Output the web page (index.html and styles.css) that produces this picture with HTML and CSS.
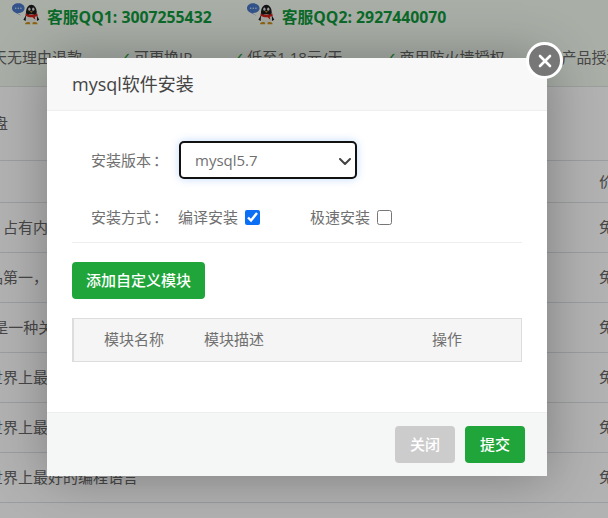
FILE: index.html
```html
<!DOCTYPE html>
<html lang="zh-CN">
<head>
<meta charset="utf-8">
<title>mysql软件安装</title>
<link rel="stylesheet" href="styles.css">
</head>
<body>
<svg class="defs" width="0" height="0" aria-hidden="true">
  <symbol id="qq" viewBox="0 0 30 22">
    <path d="M6.500 0C10.100 0 13 2.200 13 5s-2.900 5-6.500 5c-.3 0-.6 0-.9 0L10 13 3.200 9.400C1.300 8.500 0 6.900 0 5 0 2.200 2.900 0 6.500 0z" fill="#4a78c6"/>
    <circle cx="3.800" cy="5" r=".8" fill="#cfe0f5"/><circle cx="6.500" cy="5" r=".8" fill="#cfe0f5"/><circle cx="9.200" cy="5" r=".8" fill="#cfe0f5"/>
    <path d="M14.500 12 11.800 17l2.400 1.200zM25.500 12l2.700 5-2.400 1.200z" fill="#1c1c1c"/>
    <ellipse cx="20" cy="9" rx="5.600" ry="7.500" fill="#1c1c1c"/>
    <ellipse cx="20" cy="16" rx="5.600" ry="4.800" fill="#ecece4"/>
    <ellipse cx="18" cy="6" rx="1.200" ry="1.700" fill="#ddd"/><ellipse cx="22" cy="6" rx="1.200" ry="1.700" fill="#ddd"/>
    <path d="M18.400 8.200h3.200L20 9.800z" fill="#d9a520"/>
    <path d="M13.800 10.500c3 1.700 9.400 1.700 12.400 0l.4 2.600-3 .8.500 3-2.800-2.600c-2.200.2-4.400 0-7-1.200z" fill="#d0201a"/>
    <path d="M13.500 21.500c0-1.700 2.300-2.700 5-1.700l.5 1.700zM26.500 21.500c0-1.700-2.300-2.700-5-1.700l-.5 1.700z" fill="#c98f1a"/>
  </symbol>
</svg>

<header class="top">
  <div class="contacts">
    <div class="contact"><svg class="qq-icon"><use href="#qq"/></svg><span>客服QQ1: 3007255432</span></div>
    <div class="contact"><svg class="qq-icon"><use href="#qq"/></svg><span>客服QQ2: 2927440070</span></div>
  </div>
  <ul class="features">
    <li>天无理由退款</li>
    <li><i>✓</i>可更换IP</li>
    <li><i>✓</i>低至1.18元/天</li>
    <li><i>✓</i>商用防火墙授权</li>
    <li><i>✓</i>产品授权</li>
  </ul>
</header>

<main class="page">
  <h2 class="section">磁盘</h2>
  <table class="soft">
    <thead><tr><th>名称</th><th>价格</th></tr></thead>
    <tbody>
      <tr><td>，占有内存极少</td><td>免费</td></tr>
      <tr><td>品第一，性能强劲</td><td>免费</td></tr>
      <tr><td>t是一种关系型数据库</td><td>免费</td></tr>
      <tr><td>世界上最好的编程语言</td><td>免费</td></tr>
      <tr><td>世界上最好的编程语言</td><td>免费</td></tr>
      <tr><td>世界上最好的编程语言</td><td>免费</td></tr>
    </tbody>
  </table>
</main>

<div class="shade">
  <section class="modal">
    <button class="close" type="button" aria-label="关闭">
      <svg viewBox="0 0 14 14" width="14" height="14"><path d="M2 2l10 10M12 2 2 12" stroke="#fff" stroke-width="2.600" stroke-linecap="round"/></svg>
    </button>
    <h1 class="modal-title">mysql软件安装</h1>
    <div class="modal-body">
      <div class="form-row version">
        <label class="label" for="ver">安装版本<span class="colon">：</span></label>
        <div class="select-wrap">
          <select id="ver" class="select"><option>mysql5.7</option></select>
          <svg class="chevron" viewBox="0 0 12 7" width="12" height="7"><path d="M1 1l5 5 5-5" fill="none" stroke="#444" stroke-width="2" stroke-linecap="round" stroke-linejoin="round"/></svg>
        </div>
      </div>
      <div class="form-row method">
        <span class="label">安装方式<span class="colon">：</span></span>
        <label class="check first">编译安装<input type="checkbox" checked></label>
        <label class="check">极速安装<input type="checkbox"></label>
      </div>
      <button class="btn add" type="button">添加自定义模块</button>
      <div class="modules">
        <span>模块名称</span><span>模块描述</span><span>操作</span>
      </div>
    </div>
    <footer class="modal-foot">
      <button class="btn grey" type="button">关闭</button>
      <button class="btn" type="button">提交</button>
    </footer>
  </section>
</div>
</body>
</html>
```

FILE: styles.css
```css
* { box-sizing: border-box; }
html, body { margin: 0; height: 100%; }
body {
  position: relative;
  width: 608px;
  height: 518px;
  overflow: hidden;
  background: #fff;
  color: #666;
  font: 15px/1.5 "Open Sans", "Noto Sans CJK SC", sans-serif;
}
.defs { display: block; }

.top {
  height: 87px;
  background: #f3f9f0;
  border-bottom: 1px solid #dfe4e2;
  overflow: hidden;
}
.contacts { display: flex; padding: 3px 0 0 12px; gap: 35px; height: 38px; }
.contact {
  display: flex;
  gap: 6px;
  color: #10993c;
  font-weight: 700;
  font-size: 15.8px;
  line-height: 29px;
}
.qq-icon { width: 29px; height: 22px; flex: none; }
.features {
  display: flex;
  gap: 42px;
  list-style: none;
  margin: 8px 0 0 -8px;
  padding: 0;
  white-space: nowrap;
  line-height: 22px;
}
.features li:nth-child(1) { margin-right: -5px; }
.features li:nth-child(2) { margin-right: -2px; }
.features i {
  display: inline-block;
  width: 15px;
  font-style: normal;
  color: #20a53a;
  font-family: "DejaVu Sans", sans-serif;
  font-size: 15px;
}

.page { overflow: hidden; }
.section { margin: 0; height: 73px; padding: 25px 0 0 0; margin-left: -22px; font-size: 15px; font-weight: 400; line-height: 22px; }
.soft { border-collapse: collapse; width: 620px; margin-left: -12px; table-layout: fixed; }
.soft th, .soft td { text-align: left; font-weight: 400; padding: 0; border-top: 1px solid #dee2e6; white-space: nowrap; overflow: hidden; }
.soft th { height: 42px; }
.soft td { height: 50px; }
.soft th:first-child { padding-left: 100px; }
.soft tr > :last-child { width: 9px; padding: 0; overflow: visible; }
.soft tr > :first-child { width: 611px; }
.soft tbody tr:last-child td { border-bottom: 1px solid #dee2e6; }

.shade {
  position: absolute;
  inset: 0;
  background: rgba(0, 0, 0, .3);
  padding: 58px 0 0 47px;
}
.modal {
  position: relative;
  width: 500px;
  height: 418px;
  background: #fff;
  color: #707070;
  box-shadow: 1px 1px 50px rgba(0, 0, 0, .3);
  display: flex;
  flex-direction: column;
}
.close {
  position: absolute;
  left: 479px;
  top: -16px;
  width: 37px;
  height: 37px;
  padding: 0;
  border: 3px solid #fff;
  border-radius: 50%;
  background: #777;
  display: flex;
  align-items: center;
  justify-content: center;
}
.modal-title {
  margin: 0;
  height: 53px;
  padding: 0 25px;
  background: #f8f8f8;
  border-bottom: 1px solid #eee;
  font-size: 18px;
  font-weight: 400;
  line-height: 52px;
  color: #444;
}
.modal-body { flex: 1; padding: 30px 25px 0; }
.form-row { display: flex; align-items: center; }
.label { width: 107px; padding-left: 19px; flex: none; white-space: nowrap; }
.colon { font-family: "Noto Sans CJK TC", sans-serif; margin-left: 2px; }
.version { height: 38px; }
.select-wrap { position: relative; width: 178px; height: 38px; }
.select {
  appearance: none;
  display: block;
  width: 100%;
  height: 100%;
  padding: 0 14px;
  font: inherit;
  color: #707070;
  background: #fff;
  border: 2px solid #111;
  border-radius: 5px;
  box-shadow: 0 0 8px rgba(13, 110, 253, .25);
}
.chevron { position: absolute; right: 6px; top: 17px; pointer-events: none; }
.method {
  height: 64px;
  padding-top: 13px;
  border-bottom: 1px solid #eee;
}
.check { display: flex; align-items: center; white-space: nowrap; }
.check.first { width: 132px; margin-left: -1px; }
.check input { width: 15px; height: 15px; margin: 0 0 0 7px; accent-color: #0b6ff5; }
.btn {
  height: 37px;
  width: 60px;
  padding: 0;
  border: 0;
  border-radius: 4px;
  background: #20a53a;
  color: #fff;
  font: 500 15px/37px "Open Sans", "Noto Sans CJK SC", sans-serif;
}
.btn.grey { background: #ccc; }
.btn.add { display: block; width: 133px; margin-top: 19px; }
.modules {
  display: grid;
  grid-template-columns: 100px 228px 1fr;
  margin-top: 19px;
  height: 44px;
  background: #f5f5f5;
  border: 1px solid #ddd;
  border-left-width: 2px;
  line-height: 40px;
}
.modules span { padding-left: 30px; }
.modal-foot {
  height: 64px;
  display: flex;
  justify-content: flex-end;
  gap: 10px;
  padding: 13px 22px 0 0;
  background: #f5f7f7;
  border-top: 1px solid #eee;
}
```
